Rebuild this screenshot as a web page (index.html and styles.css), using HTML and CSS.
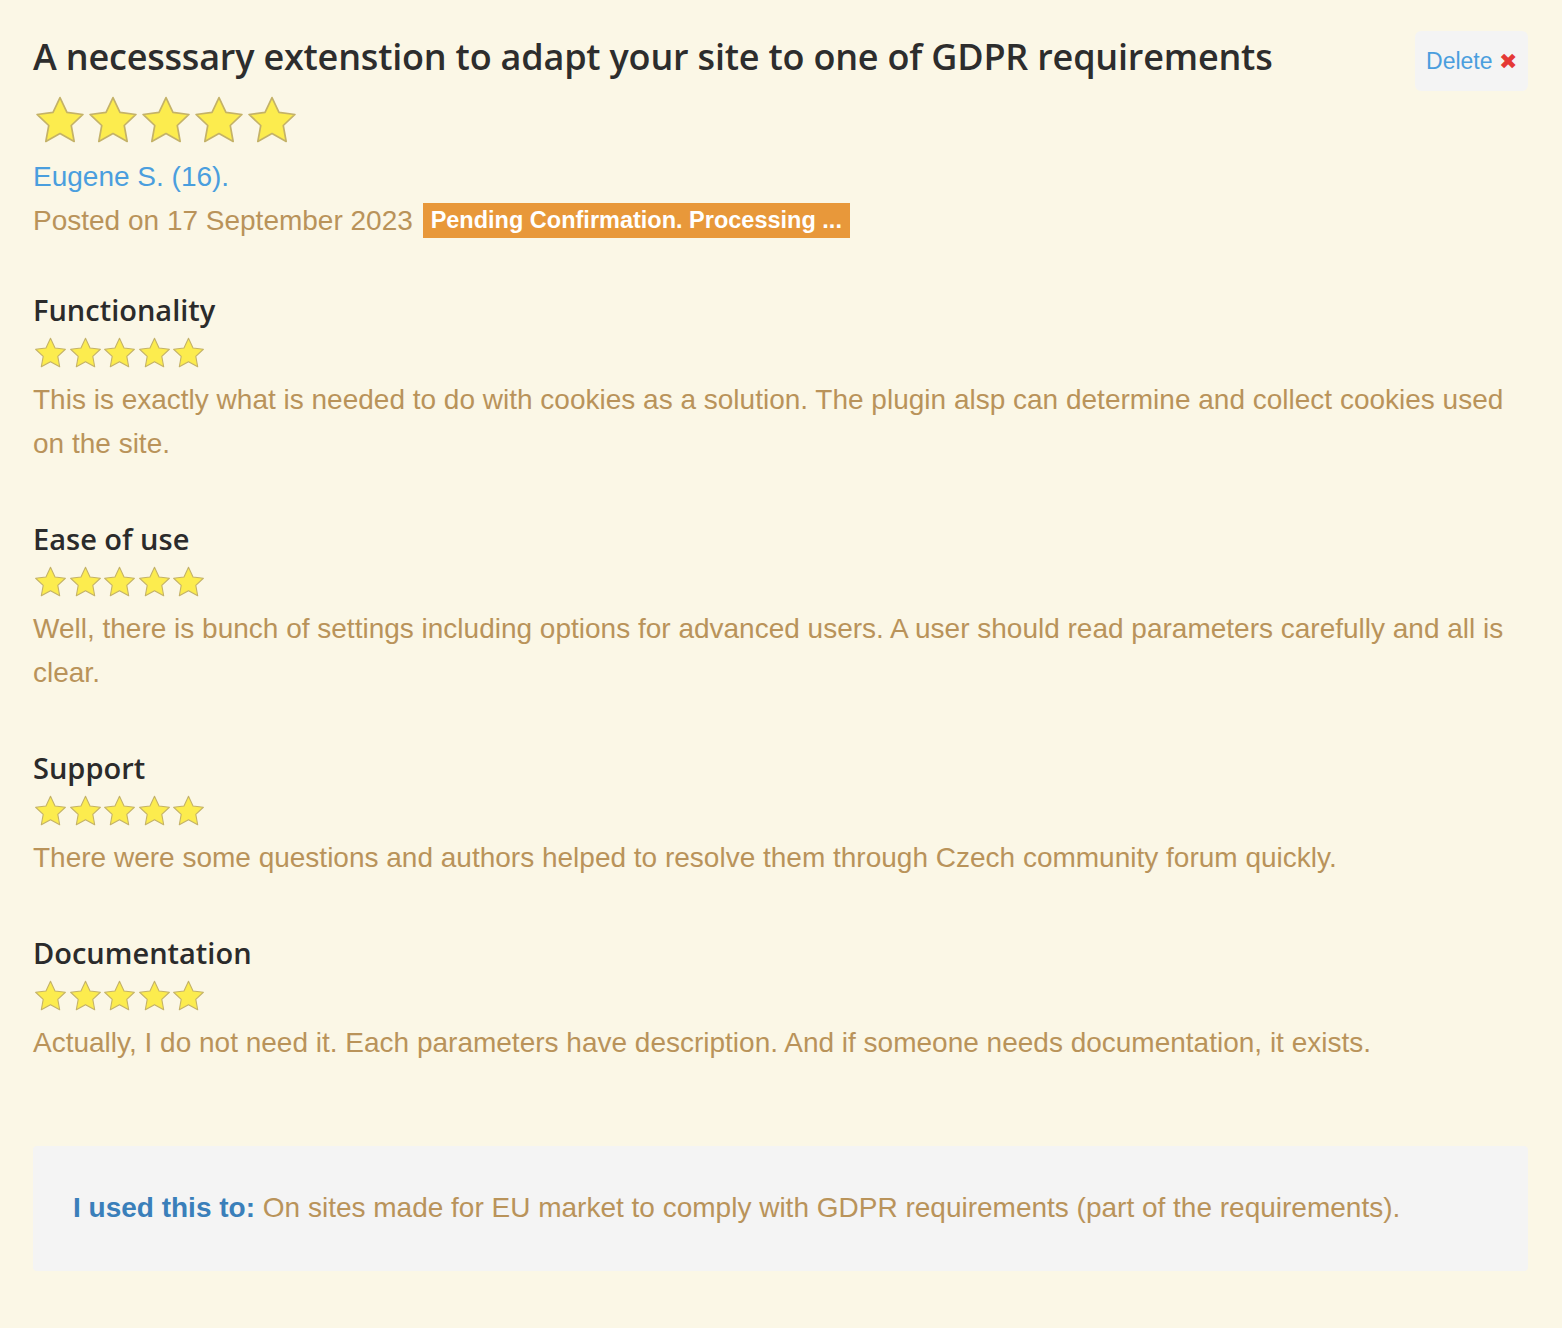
FILE: index.html
```html
<!DOCTYPE html>
<html lang="en">
<head>
    <meta charset="UTF-8">
    <title>Review</title>
    <link rel="stylesheet" href="styles.css">
</head>
<body>
    <svg width="0" height="0" class="defs">
        <defs>
            <symbol id="star" viewBox="0 0 24 24">
                <path d="M12 1.6l3.1 6.6 7.1.9-5.2 4.9 1.3 7.1L12 17.6l-6.3 3.5 1.3-7.1-5.2-4.9 7.1-.9z" fill="#fcec4e" stroke="#c4b268" stroke-width="0.75" stroke-linejoin="round"/>
            </symbol>
        </defs>
    </svg>

    <div class="review">
        <button class="delete-btn">Delete <span class="delete-x">✖</span></button>

        <div class="review-head">
            <h1 class="review-title">A necesssary extenstion to adapt your site to one of GDPR requirements</h1>
            <div class="stars stars-big">
                <svg><use href="#star"/></svg><svg><use href="#star"/></svg><svg><use href="#star"/></svg><svg><use href="#star"/></svg><svg><use href="#star"/></svg>
            </div>
            <div class="author">Eugene S. (16).</div>
            <div class="posted">Posted on 17 September 2023 <span class="badge">Pending Confirmation. Processing ...</span></div>
        </div>

        <div class="section">
            <h3>Functionality</h3>
            <div class="stars">
                <svg><use href="#star"/></svg><svg><use href="#star"/></svg><svg><use href="#star"/></svg><svg><use href="#star"/></svg><svg><use href="#star"/></svg>
            </div>
            <p>This is exactly what is needed to do with cookies as a solution. The plugin alsp can determine and collect cookies used on the site.</p>
        </div>

        <div class="section">
            <h3>Ease of use</h3>
            <div class="stars">
                <svg><use href="#star"/></svg><svg><use href="#star"/></svg><svg><use href="#star"/></svg><svg><use href="#star"/></svg><svg><use href="#star"/></svg>
            </div>
            <p>Well, there is bunch of settings including options for advanced users. A user should read parameters carefully and all is clear.</p>
        </div>

        <div class="section">
            <h3>Support</h3>
            <div class="stars">
                <svg><use href="#star"/></svg><svg><use href="#star"/></svg><svg><use href="#star"/></svg><svg><use href="#star"/></svg><svg><use href="#star"/></svg>
            </div>
            <p>There were some questions and authors helped to resolve them through Czech community forum quickly.</p>
        </div>

        <div class="section">
            <h3>Documentation</h3>
            <div class="stars">
                <svg><use href="#star"/></svg><svg><use href="#star"/></svg><svg><use href="#star"/></svg><svg><use href="#star"/></svg><svg><use href="#star"/></svg>
            </div>
            <p>Actually, I do not need it. Each parameters have description. And if someone needs documentation, it exists.</p>
        </div>

        <div class="used-for">
            <strong>I used this to:</strong> On sites made for EU market to comply with GDPR requirements (part of the requirements).
        </div>
    </div>
</body>
</html>
```

FILE: styles.css
```css
body {
    margin: 0;
    background: #fbf7e6;
    font-family: "Liberation Sans", Arial, sans-serif;
    color: #b9935a;
}
.defs {
    position: absolute;
}
.review {
    position: relative;
    padding: 35px 34px 40px 33px;
}
.review-title {
    margin: 0;
    font-family: "Open Sans", sans-serif;
    font-weight: 600;
    font-size: 36px;
    line-height: 44px;
    color: #2d2d2d;
    letter-spacing: -0.2px;
}
.delete-btn {
    position: absolute;
    top: 31px;
    right: 34px;
    width: 113px;
    height: 60px;
    background: #f4f4f4;
    border: none;
    border-radius: 6px;
    font-family: "Liberation Sans", Arial, sans-serif;
    font-size: 23px;
    color: #4a9ede;
    padding: 0;
}
.delete-x {
    color: #e53935;
    font-size: 22px;
}
.stars {
    display: flex;
    height: 35px;
    margin-top: 8px;
}
.stars svg {
    width: 35px;
    height: 35px;
    margin-right: -0.5px;
}
.stars-big {
    margin-top: 14px;
    height: 56px;
}
.stars-big svg {
    width: 54px;
    height: 56px;
    margin-right: -1px;
}
.author {
    margin-top: 6px;
    font-size: 28px;
    line-height: 44px;
    color: #4a9ede;
}
.posted {
    font-size: 28px;
    line-height: 44px;
}
.badge {
    display: inline-block;
    background: #e8983a;
    color: #fff;
    font-weight: bold;
    font-size: 23.5px;
    line-height: 35px;
    padding: 0 8px;
    margin-left: 2px;
    vertical-align: top;
    margin-top: 4px;
}
.section {
    margin-top: 55px;
}
.review-head + .section {
    margin-top: 49px;
}
.section h3 {
    margin: 0;
    font-family: "Open Sans", sans-serif;
    font-weight: 600;
    font-size: 29px;
    line-height: 36px;
    color: #2b2b2b;
}
.section p {
    margin: 7px 0 0;
    font-size: 28px;
    line-height: 44px;
}
.used-for {
    margin-top: 81px;
    background: #f4f4f4;
    border-radius: 4px;
    padding: 44px 40px 45px;
    font-size: 28px;
    line-height: 36px;
}
.used-for strong {
    color: #3a7fba;
}
```
